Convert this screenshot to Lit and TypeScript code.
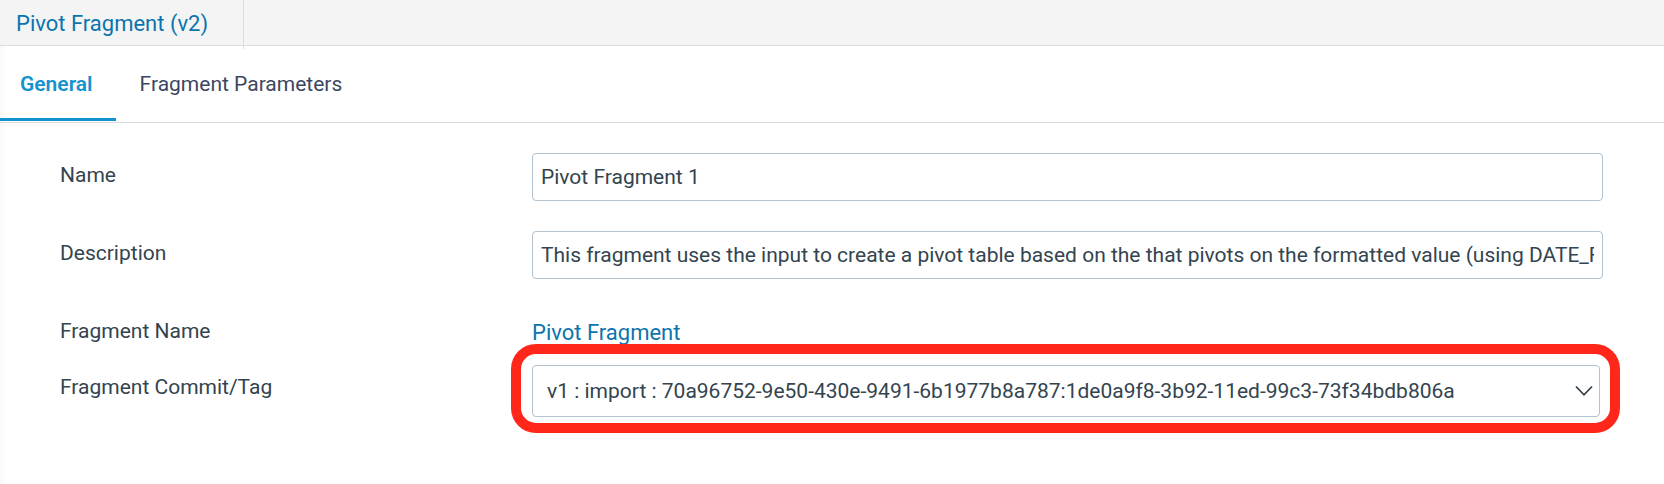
import { LitElement, html, css } from "lit";
import { customElement, state } from "lit/decorators.js";
import { classMap } from "lit/directives/class-map.js";

const TABS = ["General", "Fragment Parameters"];

@customElement("app-root")
export class AppRoot extends LitElement {
  static styles = css`
    :host {
      display: block;
      min-height: 100vh;
      background: linear-gradient(to right, #f9f9f9, #ffffff 7px);
      color: #33444f;
      font-family: Roboto, "Liberation Sans", sans-serif;
      font-size: 21px;
      line-height: 24px;
    }
    * {
      box-sizing: border-box;
    }
    a {
      color: #0b74ae;
      font-size: 22px;
      text-decoration: none;
    }
    .crumbs {
      display: flex;
      height: 46px;
      background: #f4f4f4;
      border-bottom: 1px solid #dddddd;
    }
    .crumb {
      height: 49px;
      padding: 12px 35px 0 16px;
      border-right: 1px solid #dddddd;
    }
    .tabs {
      display: flex;
      gap: 4px;
      height: 77px;
      border-bottom: 1px solid #d9dcde;
    }
    .tab {
      height: 75px;
      padding: 3px 23px 0 20px;
      border: 0;
      border-bottom: 3px solid transparent;
      background: none;
      color: #3b4761;
      font: inherit;
      cursor: pointer;
    }
    .tab.active {
      border-color: #1592d0;
      color: #1592d0;
      font-weight: 600;
    }
    form {
      padding: 30px 61px 30px 60px;
    }
    .row {
      display: grid;
      grid-template-columns: 472px minmax(0, 1fr);
      align-items: start;
      margin-bottom: 30px;
    }
    .row.compact {
      height: 36px;
      margin-bottom: 20px;
    }
    .label {
      padding-top: 10px;
    }
    .link {
      padding-top: 11px;
      line-height: 26px;
    }
    input,
    select {
      display: block;
      width: 100%;
      height: 48px;
      margin: 0;
      padding: 0 8px;
      border: 1px solid #b3c3cf;
      border-radius: 4px;
      background: #ffffff;
      color: inherit;
      font: inherit;
    }
    select {
      height: 52px;
      padding: 0 40px 0 14px;
      appearance: none;
    }
    .picker {
      position: relative;
      margin-right: 3px;
    }
    .highlight {
      position: absolute;
      inset: -21px -20px -16px -21px;
      border: 10px solid #ff261a;
      border-radius: 25px;
      pointer-events: none;
    }
    .chevron {
      position: absolute;
      top: 20px;
      right: 7px;
      width: 18px;
      height: 12px;
      pointer-events: none;
    }
  `;

  @state() private active = TABS[0];

  render() {
    return html`
      <nav class="crumbs">
        <div class="crumb"><a href="#">Pivot Fragment (v2)</a></div>
      </nav>
      <div class="tabs" role="tablist">
        ${TABS.map(
          (name) => html`<button
            role="tab"
            class=${classMap({ tab: true, active: name === this.active })}
            aria-selected=${name === this.active}
            @click=${() => (this.active = name)}
          >${name}</button>`
        )}
      </div>
      <form>
        <div class="row">
          <label class="label" for="name">Name</label>
          <input id="name" type="text" value="Pivot Fragment 1" />
        </div>
        <div class="row">
          <label class="label" for="description">Description</label>
          <input
            id="description"
            type="text"
            value="This fragment uses the input to create a pivot table based on the that pivots on the formatted value (using DATE_FORMAT)"
          />
        </div>
        <div class="row compact">
          <span class="label">Fragment Name</span>
          <div class="link"><a href="#">Pivot Fragment</a></div>
        </div>
        <div class="row">
          <label class="label" for="commit">Fragment Commit/Tag</label>
          <div class="picker">
            <select id="commit">
              <option>v1 : import : 70a96752-9e50-430e-9491-6b1977b8a787:1de0a9f8-3b92-11ed-99c3-73f34bdb806a</option>
            </select>
            <svg class="chevron" viewBox="0 0 18 12" fill="none" stroke="#33444f" stroke-width="1.8" aria-hidden="true">
              <path d="M1 1.5 L9 9.8 L17 1.5" />
            </svg>
            <div class="highlight"></div>
          </div>
        </div>
      </form>
    `;
  }
}
